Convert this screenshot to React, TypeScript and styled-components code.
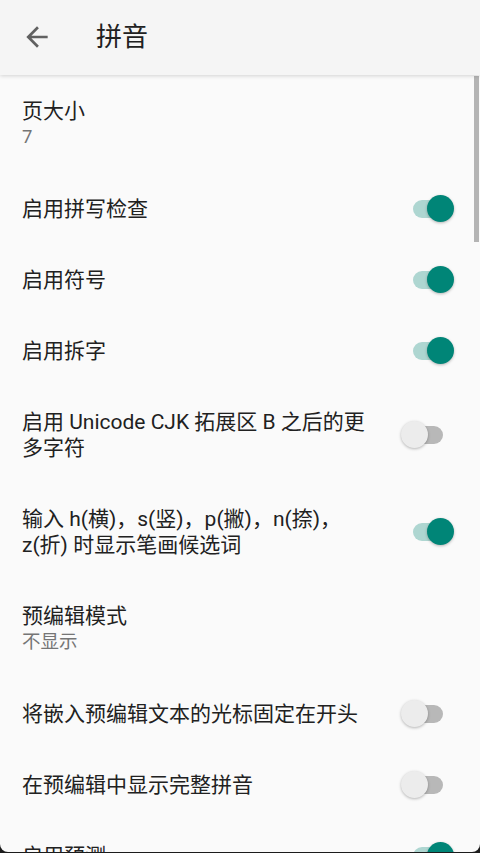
import React from "react";
import styled, { createGlobalStyle } from "styled-components";

const Global = createGlobalStyle`
  html, body { margin: 0; padding: 0; background: #1c1c1c; }
  * { box-sizing: border-box; }
  #root { width: 480px; }
`;

const Screen = styled.div`
  position: relative;
  width: 480px;
  height: 852px;
  overflow: hidden;
  background: #fafafa;
  border-bottom-left-radius: 8px;
  border-bottom-right-radius: 8px;
  font-family: Roboto, "Noto Sans CJK SC", sans-serif;
  display: flex;
  flex-direction: column;
`;

const Toolbar = styled.header`
  position: relative;
  z-index: 2;
  flex: none;
  height: 75px;
  background: #f5f5f5;
  box-shadow: 0 1px 4px rgba(0, 0, 0, 0.16);
  display: flex;
  align-items: center;
  padding-left: 21px;
`;

const BackButton = styled.div`
  width: 32px;
  height: 32px;
  display: flex;
  align-items: center;
  justify-content: center;
  margin-right: 43px;
  margin-top: -2px;
`;

const Title = styled.h1`
  margin: 0;
  font-size: 26px;
  font-weight: 400;
  color: #212121;
  line-height: 32px;
  margin-top: -2px;
`;

const List = styled.div`
  flex: 1;
  display: flex;
  flex-direction: column;
`;

const Row = styled.div`
  flex: none;
  display: flex;
  align-items: center;
  gap: 22px;
  padding: 22.5px 25px 22.5px 22px;
`;

const TextCol = styled.div`
  flex: 1;
  min-width: 0;
  display: flex;
  flex-direction: column;
`;

const ItemTitle = styled.div`
  font-size: 21px;
  line-height: 26px;
  color: #212121;
`;

const Summary = styled.div`
  font-size: 18.5px;
  line-height: 27px;
  color: #757575;
`;

const SwitchBox = styled.div`
  position: relative;
  flex: none;
  width: 55px;
  height: 26px;
`;

const Track = styled.div<{ $on: boolean }>`
  position: absolute;
  left: 13px;
  top: 4px;
  width: 30px;
  height: 18px;
  border-radius: 9px;
  background: ${(p) => (p.$on ? "#aed6d1" : "#b8b8b8")};
`;

const Thumb = styled.div<{ $on: boolean }>`
  position: absolute;
  top: -0.5px;
  left: ${(p) => (p.$on ? "27px" : "0.5px")};
  width: 27px;
  height: 27px;
  border-radius: 50%;
  background: ${(p) => (p.$on ? "#008577" : "#ececec")};
  box-shadow: 0 1px 3px rgba(0, 0, 0, 0.28);
`;

const Scrollbar = styled.div`
  position: absolute;
  right: 1px;
  top: 76px;
  width: 5px;
  height: 166px;
  background: #b4b4b4;
`;

const Switch = ({ on }: { on: boolean }) => (
  <SwitchBox>
    <Track $on={on} />
    <Thumb $on={on} />
  </SwitchBox>
);

type Item = { title: string; summary?: string; sw?: boolean };

const items: Item[] = [
  { title: "页大小", summary: "7" },
  { title: "启用拼写检查", sw: true },
  { title: "启用符号", sw: true },
  { title: "启用拆字", sw: true },
  { title: "启用 Unicode CJK 拓展区 B 之后的更多字符", sw: false },
  { title: "输入 h(横)，s(竖)，p(撇)，n(捺)，z(折) 时显示笔画候选词", sw: true },
  { title: "预编辑模式", summary: "不显示" },
  { title: "将嵌入预编辑文本的光标固定在开头", sw: false },
  { title: "在预编辑中显示完整拼音", sw: false },
  { title: "启用预测", sw: true },
];

export default function App() {
  return (
    <>
      <Global />
      <Screen>
        <Toolbar>
          <BackButton>
            <svg width="32" height="32" viewBox="0 0 24 24">
              <path
                fill="#616161"
                d="M20 11H7.83l5.59-5.59L12 4l-8 8 8 8 1.41-1.41L7.83 13H20v-2z"
              />
            </svg>
          </BackButton>
          <Title>拼音</Title>
        </Toolbar>
        <List>
          {items.map((it) => (
            <Row key={it.title}>
              <TextCol>
                <ItemTitle>{it.title}</ItemTitle>
                {it.summary && <Summary>{it.summary}</Summary>}
              </TextCol>
              {it.sw !== undefined && <Switch on={it.sw} />}
            </Row>
          ))}
        </List>
        <Scrollbar />
      </Screen>
    </>
  );
}
